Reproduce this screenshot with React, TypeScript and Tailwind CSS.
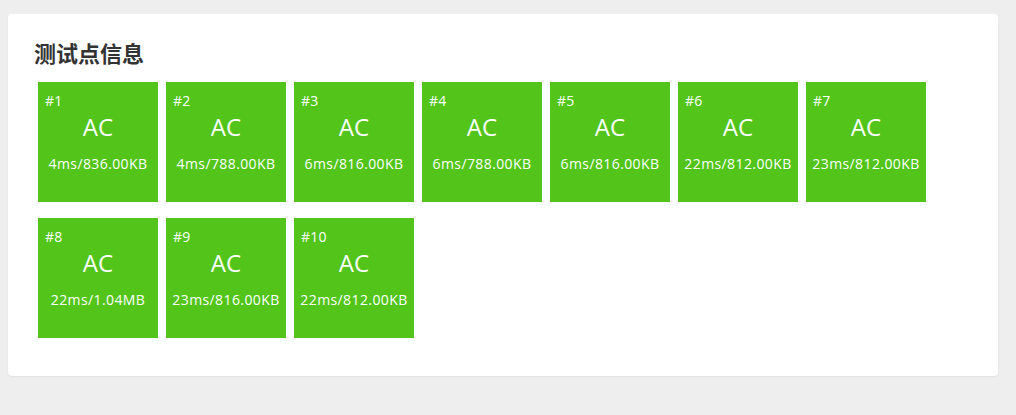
import React from "react";

const cases = [
  "4ms/836.00KB",
  "4ms/788.00KB",
  "6ms/816.00KB",
  "6ms/788.00KB",
  "6ms/816.00KB",
  "22ms/812.00KB",
  "23ms/812.00KB",
  "22ms/1.04MB",
  "23ms/816.00KB",
  "22ms/812.00KB",
];

export default function App() {
  return (
    <div className="w-[1016px] h-[415px] bg-[#eeeeee] pt-[14px] pl-[8px] overflow-hidden">
      <div className="w-[990px] h-[362px] bg-white rounded-[4px] shadow-[0_1px_2px_rgba(0,0,0,0.06)] pt-[27px] pl-[30px]">
        <h2
          className="text-[22px] leading-[22px] font-bold text-[#333333] ml-[-4px] mb-[19px]"
          style={{ fontFamily: '"Noto Sans CJK SC", "Noto Sans", sans-serif' }}
        >
          测试点信息
        </h2>
        <div
          className="flex flex-wrap gap-x-2 gap-y-4 w-[900px]"
          style={{ fontFamily: '"Open Sans", "Noto Sans", sans-serif' }}
        >
          {cases.map((c, i) => (
            <div key={i} className="w-[120px] h-[120px] bg-[#52c41a] text-white flex flex-col">
              <div className="text-[14px] leading-[16px] pl-[7px] pt-[11px] tracking-[0.2px]">#{i + 1}</div>
              <div className="text-[24px] leading-[30px] text-center mt-[3px]">AC</div>
              <div className="text-[14px] leading-[16px] text-center mt-[14px] tracking-[0.4px] whitespace-nowrap">{c}</div>
            </div>
          ))}
        </div>
      </div>
    </div>
  );
}
